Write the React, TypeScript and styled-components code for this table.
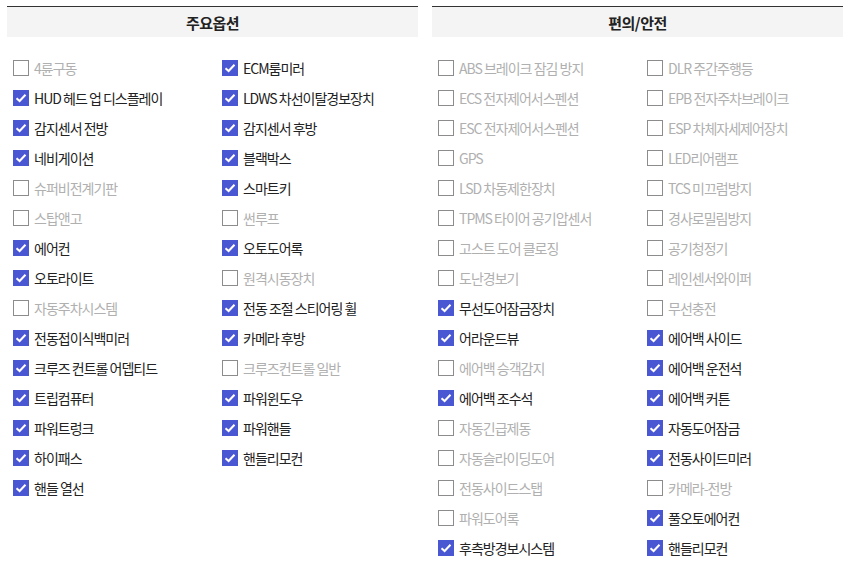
import React from "react";
import styled, { createGlobalStyle } from "styled-components";

const Global = createGlobalStyle`
  html, body { margin: 0; padding: 0; background: #fff; }
  body { font-family: "Noto Sans CJK KR", "Noto Sans", sans-serif; }
`;

const Page = styled.div`
  display: flex;
  gap: 14px;
  padding: 6px 5px 0 7px;
  width: 848px;
  box-sizing: border-box;
`;

const Panel = styled.section`
  width: 411px;
  flex: none;
`;

const Header = styled.h2`
  margin: 0;
  height: 30px;
  border-top: 1.5px solid #333;
  background: #f4f4f4;
  display: flex;
  align-items: center;
  justify-content: center;
  font-size: 15px;
  font-weight: 700;
  color: #222;
  letter-spacing: -0.5px;
`;

const Grid = styled.ul`
  list-style: none;
  margin: 0;
  padding: 16px 0 0 6px;
  display: grid;
  grid-template-columns: 209px 1fr;
  grid-auto-rows: 30px;
`;

const Item = styled.li<{ $on: boolean }>`
  display: flex;
  align-items: center;
  gap: 5px;
  font-size: 14px;
  letter-spacing: -1px;
  white-space: nowrap;
  color: ${(p) => (p.$on ? "#222" : "#b0b0b0")};
`;

const Box = styled.span<{ $on: boolean }>`
  width: 16px;
  height: 16px;
  box-sizing: border-box;
  flex: none;
  display: flex;
  align-items: center;
  justify-content: center;
  background: ${(p) => (p.$on ? "#4a57d3" : "#fff")};
  border: ${(p) => (p.$on ? "none" : "1px solid #8c8c8c")};
`;

type Opt = [string, boolean];

const left: Opt[] = [
  ["4륜구동", false], ["ECM룸미러", true],
  ["HUD 헤드 업 디스플레이", true], ["LDWS 차선이탈경보장치", true],
  ["감지센서 전방", true], ["감지센서 후방", true],
  ["네비게이션", true], ["블랙박스", true],
  ["슈퍼비전계기판", false], ["스마트키", true],
  ["스탑앤고", false], ["썬루프", false],
  ["에어컨", true], ["오토도어록", true],
  ["오토라이트", true], ["원격시동장치", false],
  ["자동주차시스템", false], ["전동 조절 스티어링 휠", true],
  ["전동접이식백미러", true], ["카메라 후방", true],
  ["크루즈 컨트롤 어뎁티드", true], ["크루즈컨트롤 일반", false],
  ["트립컴퓨터", true], ["파워윈도우", true],
  ["파워트렁크", true], ["파워핸들", true],
  ["하이패스", true], ["핸들리모컨", true],
  ["핸들 열선", true],
];

const right: Opt[] = [
  ["ABS 브레이크 잠김 방지", false], ["DLR 주간주행등", false],
  ["ECS 전자제어서스펜션", false], ["EPB 전자주차브레이크", false],
  ["ESC 전자제어서스펜션", false], ["ESP 차체자세제어장치", false],
  ["GPS", false], ["LED리어램프", false],
  ["LSD 차동제한장치", false], ["TCS 미끄럼방지", false],
  ["TPMS 타이어 공기압센서", false], ["경사로밀림방지", false],
  ["고스트 도어 클로징", false], ["공기청정기", false],
  ["도난경보기", false], ["레인센서와이퍼", false],
  ["무선도어잠금장치", true], ["무선충전", false],
  ["어라운드뷰", true], ["에어백 사이드", true],
  ["에어백 승객감지", false], ["에어백 운전석", true],
  ["에어백 조수석", true], ["에어백 커튼", true],
  ["자동긴급제동", false], ["자동도어잠금", true],
  ["자동슬라이딩도어", false], ["전동사이드미러", true],
  ["전동사이드스탭", false], ["카메라-전방", false],
  ["파워도어록", false], ["풀오토에어컨", true],
  ["후측방경보시스템", true], ["핸들리모컨", true],
];

const Check = () => (
  <svg width="12" height="10" viewBox="0 0 12 10">
    <path d="M1.5 5.2 L4.6 8 L10.5 1.8" fill="none" stroke="#fff" strokeWidth="2" />
  </svg>
);

const OptionGrid = ({ items }: { items: Opt[] }) => (
  <Grid>
    {items.map(([label, on], i) => (
      <Item key={i} $on={on}>
        <Box $on={on}>{on && <Check />}</Box>
        {label}
      </Item>
    ))}
  </Grid>
);

export default function App() {
  return (
    <>
      <Global />
      <Page>
        <Panel>
          <Header>주요옵션</Header>
          <OptionGrid items={left} />
        </Panel>
        <Panel>
          <Header>편의/안전</Header>
          <OptionGrid items={right} />
        </Panel>
      </Page>
    </>
  );
}
